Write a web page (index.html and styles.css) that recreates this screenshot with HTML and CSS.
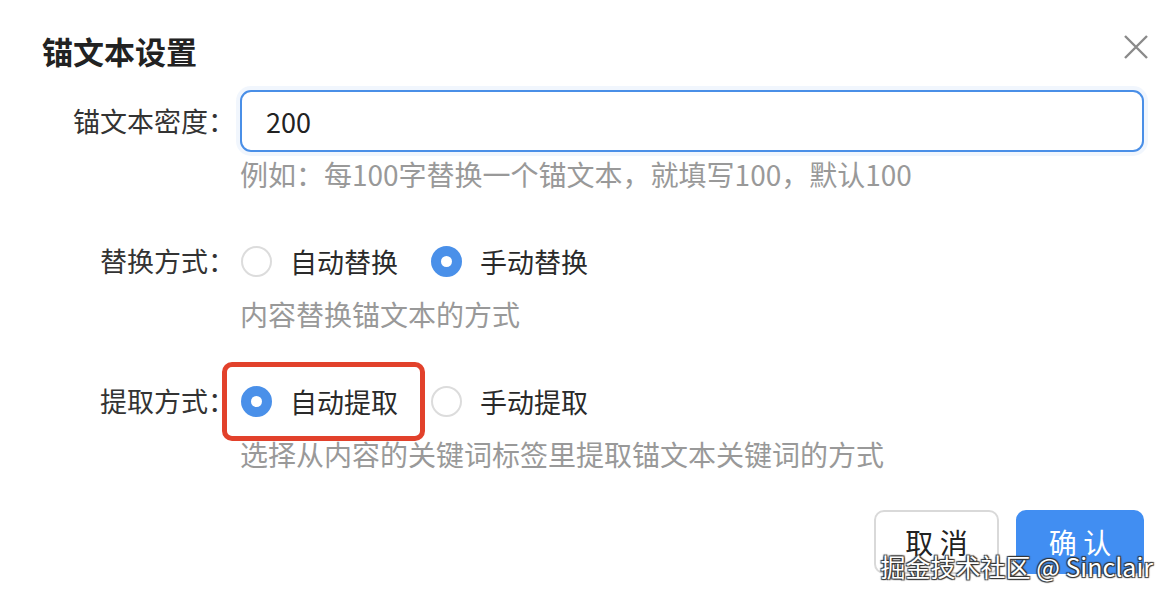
FILE: index.html
```html
<!DOCTYPE html>
<html lang="zh-CN">
<head>
	<meta charset="UTF-8">
	<title>锚文本设置</title>
	<link rel="stylesheet" href="styles.css">
</head>
<body>
	<div class="dialog">
		<div class="dialog-header">
			<h2 class="dialog-title">锚文本设置</h2>
			<a href="javascript:;" class="dialog-close">
				<svg width="26" height="26" viewBox="0 0 26 26"><path d="M2 2L24 24M24 2L2 24" stroke="#8a8a8a" stroke-width="2.4" fill="none"/></svg>
			</a>
		</div>

		<div class="form-item">
			<label class="form-label">锚文本密度：</label>
			<div class="form-control">
				<input class="input" type="text" value="200">
				<div class="form-help">例如：每100字替换一个锚文本，就填写100，默认100</div>
			</div>
		</div>

		<div class="form-item">
			<label class="form-label">替换方式：</label>
			<div class="form-control">
				<div class="radio-group">
					<span class="radio"><i class="radio-dot"></i>自动替换</span>
					<span class="radio checked"><i class="radio-dot"></i>手动替换</span>
				</div>
				<div class="form-help">内容替换锚文本的方式</div>
			</div>
		</div>

		<div class="form-item">
			<label class="form-label">提取方式：</label>
			<div class="form-control">
				<div class="radio-group">
					<span class="radio checked marked"><i class="radio-dot"></i>自动提取</span>
					<span class="radio"><i class="radio-dot"></i>手动提取</span>
				</div>
				<div class="form-help">选择从内容的关键词标签里提取锚文本关键词的方式</div>
			</div>
		</div>

		<div class="dialog-footer">
			<button class="btn">取 消</button>
			<button class="btn btn-primary">确 认</button>
		</div>
	</div>

	<div class="watermark">掘金技术社区 @ Sinclair</div>
</body>
</html>
```

FILE: styles.css
```css
*{
	padding: 0;
	margin: 0;
	box-sizing: border-box;
}

body{
	width: 1172px;
	height: 596px;
	overflow: hidden;
	background: #fff;
	color: #333;
	font-family: "Noto Sans CJK SC", "Noto Sans", sans-serif;
	font-size: 27px;
	position: relative;
}

.dialog{
	padding: 31px 28px 0 42px;
}

.dialog-header{
	display: flex;
	justify-content: space-between;
	align-items: flex-start;
	margin-bottom: 19px;
}
.dialog-title{
	font-size: 31px;
	line-height: 40px;
	font-weight: 700;
	color: #222;
}
.dialog-close{
	display: block;
	width: 26px;
	height: 26px;
	margin-top: -2px;
	margin-right: -5px;
}

.form-item{
	display: flex;
	margin-bottom: 41px;
}
.form-label{
	width: 198px;
	flex-shrink: 0;
	text-align: right;
	padding-right: 5px;
	line-height: 62px;
	color: #333;
}
.form-control{
	flex: 1;
}

.input{
	display: block;
	width: 100%;
	height: 62px;
	padding: 0 24px;
	border: 2px solid #4a8fe7;
	border-radius: 11px;
	box-shadow: 0 0 0 4px rgba(74, 143, 231, 0.08);
	font-family: inherit;
	font-size: 27px;
	color: #222;
	outline: none;
}

.form-help{
	margin-top: 7px;
	line-height: 30px;
	font-size: 28px;
	color: #999;
}

.radio-group{
	display: flex;
	height: 62px;
	align-items: center;
	margin-left: 1px;
}
.radio{
	display: inline-flex;
	align-items: center;
	margin-right: 33px;
	color: #2a2a2a;
	position: relative;
}
.radio-dot{
	width: 31px;
	height: 31px;
	border: 2px solid #dcdcdc;
	border-radius: 50%;
	margin-right: 18px;
	position: relative;
}
.radio.checked .radio-dot{
	border-color: #4a90e9;
	background: #4a90e9;
}
.radio.checked .radio-dot:after{
	content: "";
	position: absolute;
	left: 50%;
	top: 50%;
	width: 11px;
	height: 11px;
	margin: -5.5px 0 0 -5.5px;
	border-radius: 50%;
	background: #fff;
}

/* annotation box */
.radio.marked:before{
	content: "";
	position: absolute;
	left: -19px;
	right: -27px;
	top: -20px;
	bottom: -20px;
	border: 5px solid #e2412b;
	border-radius: 10px;
}

.dialog-footer{
	display: flex;
	justify-content: flex-end;
	gap: 17px;
	margin-top: 1px;
}
.btn{
	height: 64px;
	width: 125px;
	border: 2px solid #d9d9d9;
	border-radius: 10px;
	background: #fff;
	font-family: inherit;
	font-size: 28px;
	color: #222;
}
.btn-primary{
	width: 128px;
	background: #418ef2;
	border-color: #418ef2;
	color: #fff;
}

.watermark{
	position: absolute;
	right: 19px;
	bottom: 14px;
	font-size: 25px;
	line-height: 32px;
	color: #fff;
	text-shadow: 1px 1px 1px #333, -1px -1px 1px #333, 1px -1px 1px #333, -1px 1px 1px #333;
}
```
